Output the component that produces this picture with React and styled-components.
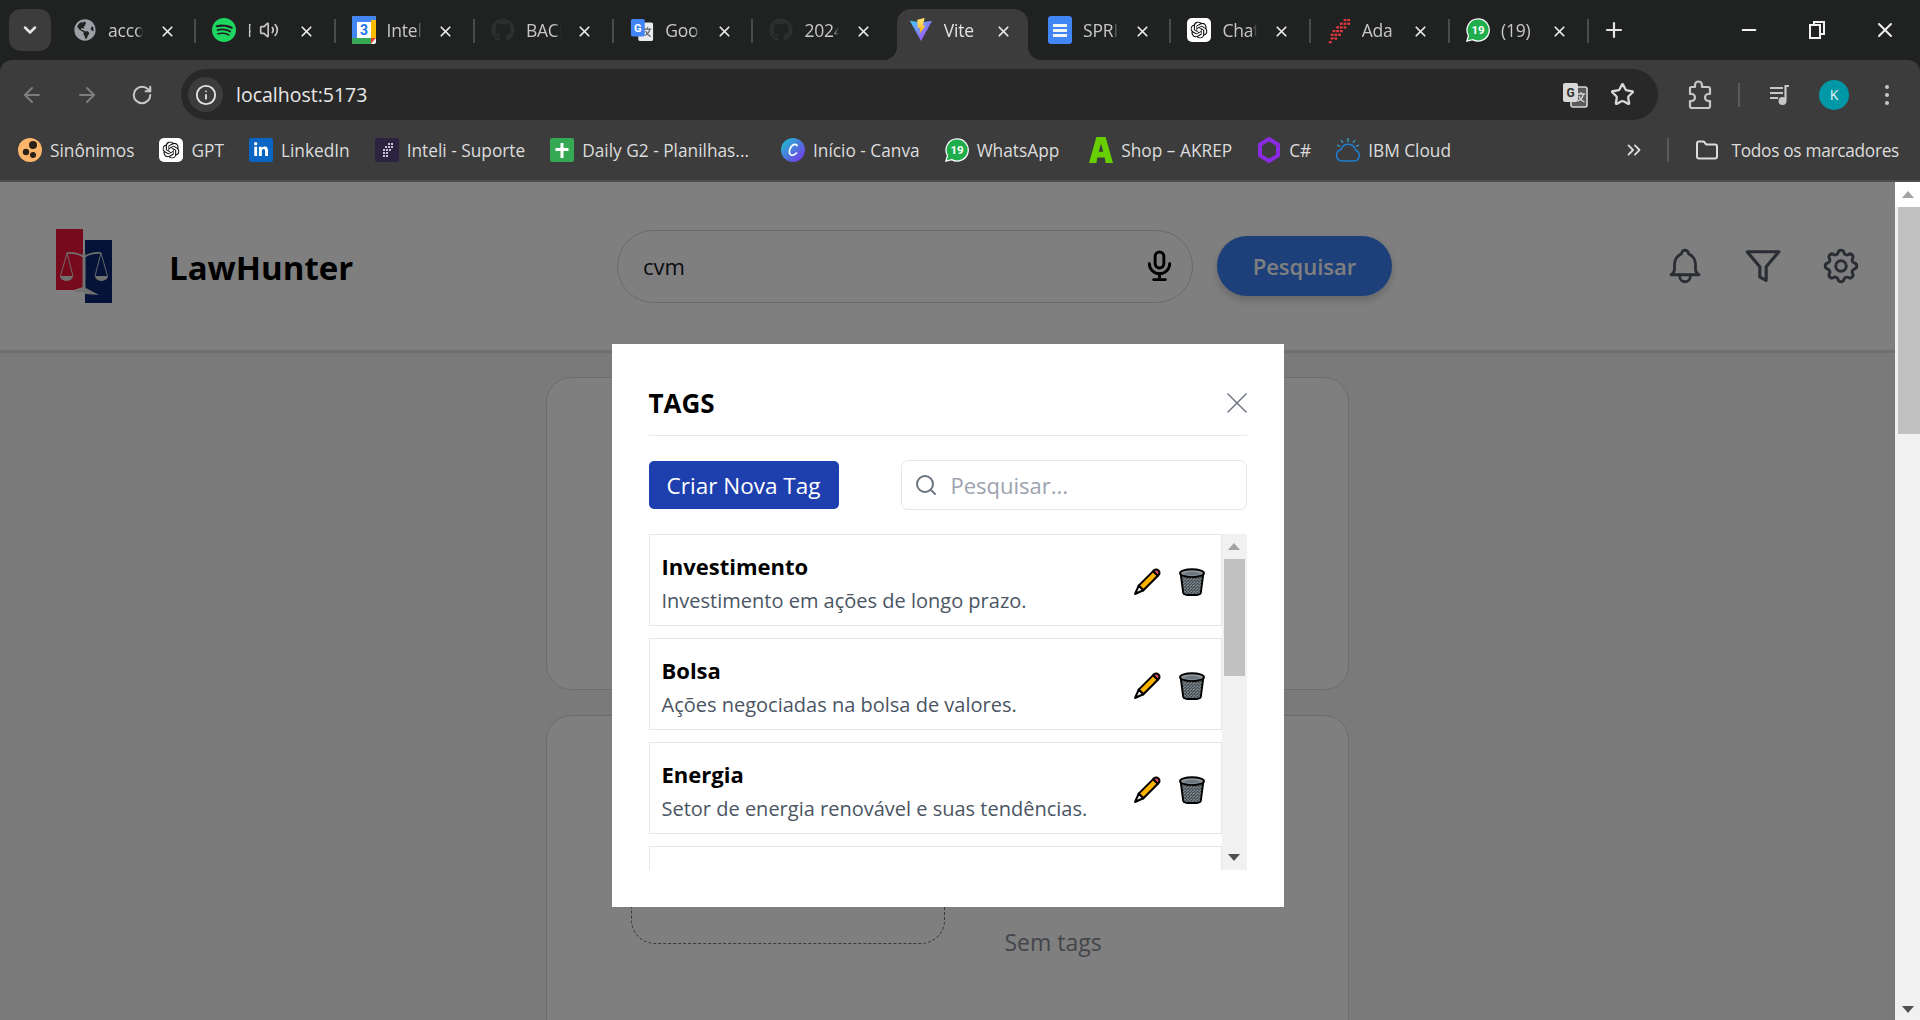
import React from "react";
import styled, { createGlobalStyle, css } from "styled-components";
import {
  ArrowLeft, ArrowRight, RotateCw, Info, Star, ChevronDown, X, Plus, Minus, Volume2, Folder, ChevronsRight, Search,
} from "lucide-react";
import { SiSpotify, SiOpenai } from "react-icons/si";
import { FaGithub, FaGlobeAmericas, FaLinkedinIn } from "react-icons/fa";
import { FiFilter } from "react-icons/fi";
import { TbBell, TbSettings, TbMicrophone } from "react-icons/tb";

const FONT = `"Open Sans", "Noto Sans", "Liberation Sans", sans-serif`;

const Global = createGlobalStyle`
  html, body { margin: 0; padding: 0; height: 100%; overflow: hidden; background: #202222; }
  #root { height: 100%; }
  * { box-sizing: border-box; }
  body { font-family: ${FONT}; }
`;

const Frame = styled.div`
  height: 1020px;
  display: flex;
  flex-direction: column;
  overflow: hidden;
`;

/* ---------- tab strip ---------- */
const TabStrip = styled.div`
  height: 60px;
  flex: none;
  background: #202222;
  display: flex;
  align-items: flex-end;
  padding-left: 9px;
`;
const TabSwitcher = styled.div`
  width: 42px;
  height: 42px;
  margin: 0 6px 9px 0;
  border-radius: 12px;
  background: #3c3c3c;
  color: #e3e3e3;
  display: flex;
  align-items: center;
  justify-content: center;
`;
const Tab = styled.div`
  width: 139.3px;
  height: 51px;
  flex: none;
  position: relative;
  display: flex;
  align-items: center;
  padding: 0 0 9px 16px;
  color: #c7c7c7;
  ${(p) => p.$sep && css`
    &::after {
      content: "";
      position: absolute;
      right: 0;
      top: 10px;
      height: 24px;
      width: 2px;
      background: #4a4c4c;
    }
  `}
  ${(p) => p.$active && css`
    background: #3c3c3c;
    border-radius: 14px 14px 0 0;
    color: #e3e3e3;
    margin: 0 4px;
    width: 131.3px;
    padding-left: 12px;
    &::before, &::after {
      content: "";
      position: absolute;
      bottom: 0;
      width: 14px;
      height: 14px;
      top: auto;
      background: radial-gradient(circle at 0 0, transparent 14px, #3c3c3c 14.5px);
    }
    &::before { left: -14px; }
    &::after { right: -14px; background: radial-gradient(circle at 100% 0, transparent 14px, #3c3c3c 14.5px); }
  `}
`;
const Fav = styled.span`
  width: 24px;
  height: 24px;
  flex: none;
  display: flex;
  align-items: center;
  justify-content: center;
`;
const TabLabel = styled.span`
  width: ${(p) => p.$w || 35}px;
  margin-left: 11px;
  font-size: 17.5px;
  letter-spacing: -0.2px;
  white-space: nowrap;
  overflow: hidden;
  -webkit-mask-image: linear-gradient(90deg, #000 82%, transparent);
  mask-image: linear-gradient(90deg, #000 82%, transparent);
`;
const TabAudio = styled.span`
  color: #c7c7c7;
  display: flex;
  margin-left: 8px;
  width: 22px;
`;
const TabClose = styled.span`
  position: absolute;
  left: ${(p) => p.$x}px;
  top: 13px;
  width: 18px;
  height: 18px;
  color: #ebebeb;
  display: flex;
  align-items: center;
  justify-content: center;
`;
const NewTab = styled.span`
  width: 24px;
  height: 24px;
  margin: 0 0 18px 13px;
  color: #e3e3e3;
  display: flex;
`;
const WindowControls = styled.div`
  margin-left: auto;
  display: flex;
  height: 60px;
  align-items: center;
  color: #f2f2f2;
  padding-right: 23px;
  gap: 44px;
`;
const WinBtn = styled.span`
  width: 24px;
  height: 24px;
  display: flex;
  align-items: center;
  justify-content: center;
`;

/* ---------- toolbar ---------- */
const Toolbar = styled.div`
  height: 60px;
  flex: none;
  background: #3c3c3c;
  border-radius: 12px 12px 0 0;
  display: flex;
  align-items: flex-end;
  padding-left: 20px;
  padding-right: 28px;
`;
const NavButton = styled.span`
  width: 24px;
  height: 24px;
  margin: 0 31px 13px 0;
  display: flex;
  align-items: center;
  justify-content: center;
  color: ${(p) => (p.$off ? "#7d7d7d" : "#c7c7c7")};
`;
const AddressBar = styled.div`
  width: 1477px;
  height: 51px;
  margin-left: -4px;
  background: #282828;
  border-radius: 26px;
  display: flex;
  align-items: center;
  padding: 0 23px 0 7px;
`;
const InfoChip = styled.span`
  width: 35px;
  height: 35px;
  border-radius: 50%;
  background: #3c3c3c;
  color: #e3e3e3;
  display: flex;
  align-items: center;
  justify-content: center;
`;
const Url = styled.span`
  margin-left: 13px;
  font-size: 19.5px;
  color: #e8e8e8;
`;
const AddressActions = styled.div`
  margin-left: auto;
  display: flex;
  align-items: center;
  gap: 22px;
  color: #d8d8d8;
`;
const ToolIcons = styled.div`
  flex: 1;
  height: 51px;
  display: flex;
  align-items: center;
  justify-content: flex-end;
  color: #c7c7c7;
`;
const ToolDivider = styled.span`
  width: 2px;
  height: 24px;
  background: #5a5a5a;
  margin: 0 28px 0 25px;
`;
const Avatar = styled.span`
  width: 30px;
  height: 30px;
  border-radius: 50%;
  background: #0097a7;
  color: #e6f7f8;
  font-size: 14px;
  display: flex;
  align-items: center;
  justify-content: center;
  margin: 0 36px 0 27px;
`;
const Kebab = styled.span`
  display: flex;
  flex-direction: column;
  gap: 4px;
  margin-right: 3px;
  & > i { width: 4px; height: 4px; border-radius: 50%; background: #c7c7c7; display: block; }
`;

/* ---------- bookmarks ---------- */
const Bookmarks = styled.div`
  height: 62px;
  flex: none;
  background: #3c3c3c;
  border-bottom: 2px solid #4e4e4e;
  display: flex;
  align-items: center;
  padding: 0 20px 0 18px;
  color: #dcdcdc;
  font-size: 17.3px;
`;
const Bookmark = styled.span`
  display: flex;
  align-items: center;
  gap: ${(p) => p.$gap || 8}px;
  margin-right: ${(p) => p.$end || 25}px;
  white-space: nowrap;
`;
const AllBookmarks = styled(Bookmark)`
  letter-spacing: -0.3px;
`;
const BookmarkEnd = styled.div`
  margin-left: auto;
  display: flex;
  align-items: center;
  white-space: nowrap;
  color: #dcdcdc;
`;
const BarDivider = styled.span`
  width: 2px;
  height: 24px;
  background: #5a5a5a;
  margin: 0 26px 0 22px;
`;

/* ---------- page ---------- */
const Viewport = styled.div`
  flex: 1;
  min-height: 0;
  display: flex;
`;
const Page = styled.div`
  flex: 1;
  position: relative;
  overflow: hidden;
  background: #f4f5f7;
`;
const PageScroll = styled.div`
  width: 25px;
  flex: none;
  background: #f1f1f1;
  display: flex;
  flex-direction: column;
  align-items: flex-end;
`;
const ScrollArrow = styled.span`
  width: 0;
  height: 0;
  border-left: 6px solid transparent;
  border-right: 6px solid transparent;
  ${(p) => (p.$down
    ? css`border-top: 7px solid #505050;`
    : css`border-bottom: 7px solid #a3a3a3;`)}
`;
const PageArrowBox = styled.div`
  height: 25px;
  width: 25px;
  background: #fff;
  display: flex;
  align-items: center;
  justify-content: center;
`;
const PageThumb = styled.div`
  width: 22px;
  height: 227px;
  background: #c1c1c1;
`;
const PageArrowBottom = styled.div`
  margin-top: auto;
  height: 21px;
  width: 25px;
  display: flex;
  align-items: center;
  justify-content: center;
`;
const Header = styled.header`
  height: 171px;
  background: #fff;
  border-bottom: 3px solid #dfdfdf;
  display: flex;
  align-items: center;
  padding: 0 33px 0 56px;
`;
const Brand = styled.div`
  width: 561px;
  display: flex;
  align-items: center;
  gap: 57px;
`;
const BrandName = styled.div`
  font-size: 33px;
  font-weight: 700;
  color: #000;
  padding-top: 2px;
`;
const SearchField = styled.div`
  width: 576px;
  height: 73px;
  border: 1px solid #cfd2d6;
  border-radius: 37px;
  display: flex;
  align-items: center;
  padding: 0 15px 0 23px;
  color: #000;
`;
const SearchValue = styled.input`
  flex: 1;
  border: none;
  outline: none;
  background: transparent;
  font: 400 22px ${FONT};
  color: #111827;
`;
const SearchButton = styled.button`
  width: 175px;
  height: 60px;
  margin-left: 24px;
  border: none;
  border-radius: 30px;
  background: #3b7ef5;
  color: #fff;
  font: 600 22px ${FONT};
  box-shadow: 0 4px 8px rgba(0, 0, 0, 0.2);
`;
const HeaderIcons = styled.div`
  margin-left: auto;
  display: flex;
  align-items: center;
  gap: 38px;
  color: #545a66;
`;
const Main = styled.main`
  padding-top: 24px;
  display: flex;
  flex-direction: column;
  align-items: center;
  gap: 25px;
  padding-right: 1px;
`;
const Card = styled.section`
  width: 803px;
  height: ${(p) => p.$h}px;
  flex: none;
  background: #fff;
  border: 1px solid #d6d8dc;
  border-radius: 25px;
  display: flex;
  align-items: flex-start;
  padding: 40px 0 0 84px;
  gap: 60px;
`;
const DashedBox = styled.div`
  width: 314px;
  height: 188px;
  border: 1px dashed #6b7280;
  border-radius: 24px;
`;
const NoTags = styled.div`
  margin-top: 170px;
  font-size: 23px;
  color: #868b94;
`;

/* ---------- modal ---------- */
const Overlay = styled.div`
  position: absolute;
  inset: 0;
  background: rgba(0, 0, 0, 0.5);
  display: flex;
  justify-content: center;
  align-items: flex-start;
  padding-top: 162px;
`;
const Modal = styled.div`
  width: 672px;
  height: 563px;
  background: #fff;
  padding: 37px;
`;
const ModalHead = styled.div`
  height: 55px;
  padding-bottom: 10px;
  border-bottom: 1.5px solid #e5e7eb;
  display: flex;
  align-items: center;
  justify-content: space-between;
`;
const ModalTitle = styled.h2`
  margin: 0;
  font-size: 26px;
  font-weight: 700;
  color: #000;
`;
const CloseBtn = styled.span`
  color: #6b7280;
  display: flex;
  margin-right: -8px;
`;
const ModalControls = styled.div`
  display: flex;
  align-items: center;
  justify-content: space-between;
  margin-top: 24px;
  height: 50px;
`;
const CreateBtn = styled.button`
  width: 190px;
  height: 48px;
  border: none;
  border-radius: 5px;
  background: #1e40af;
  color: #fff;
  font: 400 22.5px ${FONT};
`;
const TagSearch = styled.label`
  width: 346px;
  height: 50px;
  border: 1.5px solid #e5e7eb;
  border-radius: 7px;
  display: flex;
  align-items: center;
  padding-left: 12px;
  gap: 11px;
  color: #6b7280;
`;
const TagSearchInput = styled.input`
  flex: 1;
  min-width: 0;
  border: none;
  outline: none;
  font: 400 22px ${FONT};
  &::placeholder { color: #9ca3af; opacity: 1; }
`;
const ListWrap = styled.div`
  margin-top: 24px;
  height: 336px;
  display: flex;
  overflow: hidden;
`;
const TagList = styled.div`
  flex: 1;
  min-width: 0;
  display: flex;
  flex-direction: column;
  gap: 12px;
`;
const TagRow = styled.div`
  height: 92px;
  flex: none;
  border: 1.5px solid #e5e7eb;
  display: flex;
  align-items: center;
  justify-content: space-between;
  padding: 0 16px 0 12px;
`;
const TagBody = styled.div`
  padding-top: 4px;
`;
const TagName = styled.div`
  font-size: 22px;
  font-weight: 700;
  line-height: 32px;
  color: #000;
`;
const TagDesc = styled.div`
  margin-top: 5px;
  font-size: 20px;
  line-height: 28px;
  color: #4b5563;
  white-space: nowrap;
`;
const TagActions = styled.div`
  display: flex;
  gap: 18px;
  align-items: center;
  margin-top: 3px;
`;
const ListScroll = styled.div`
  width: 25px;
  flex: none;
  background: #f1f1f1;
  display: flex;
  flex-direction: column;
  align-items: center;
`;
const ListArrowBox = styled.div`
  height: 25px;
  display: flex;
  align-items: center;
  justify-content: center;
  flex: none;
`;
const ListThumb = styled.div`
  width: 21px;
  height: 117px;
  background: #c1c1c1;
`;
const ListArrowBottom = styled(ListArrowBox)`
  margin-top: auto;
`;

/* ---------- drawings ---------- */
const Square = ({ bg, r = 3, children }) => (
  <svg width="24" height="24" viewBox="0 0 24 24"><rect width="24" height="24" rx={r} fill={bg} />{children}</svg>
);
const Calendar = () => (
  <svg width="24" height="28" viewBox="0 0 24 28">
    <rect width="24" height="28" rx="2" fill="#fff" />
    <path d="M0 2a2 2 0 0 1 2-2h20a2 2 0 0 1 2 2v4H0z" fill="#4285f4" />
    <rect x="0" y="4" width="5" height="18" fill="#4285f4" />
    <rect x="19" y="4" width="5" height="18" fill="#fbbc04" />
    <path d="M0 22h5v6H2a2 2 0 0 1-2-2z" fill="#34a853" />
    <rect x="5" y="22" width="14" height="6" fill="#34a853" />
    <path d="M19 22h5l-5 6z" fill="#ea4335" />
    <text x="12" y="19" textAnchor="middle" fontSize="14" fontWeight="700" fill="#1a73e8" fontFamily="Roboto, sans-serif">3</text>
  </svg>
);
const GTranslate = ({ mono }) => (
  <svg width="26" height="26" viewBox="0 0 26 26">
    <rect x="9" y="5" width="16" height="20" rx="2" fill={mono ? "#5a5a5a" : "#e8eaed"} stroke={mono ? "#d8d8d8" : "none"} strokeWidth="1.6" />
    <rect x="1" y="1" width="15" height="19" rx="2" fill={mono ? "#d8d8d8" : "#4285f4"} />
    <text x="8.5" y="15" textAnchor="middle" fontSize="12" fontWeight="700" fill={mono ? "#333" : "#fff"} fontFamily="Roboto, sans-serif">G</text>
    <path d="M15 12h8M19 10v2M21.5 12c-1 4-3 6-5.5 7M17 14c1 3 3 5 5.5 6" fill="none" stroke={mono ? "#d8d8d8" : "#5f6368"} strokeWidth="1.3" />
  </svg>
);
const Vite = () => (
  <svg width="26" height="26" viewBox="0 0 26 26">
    <defs>
      <linearGradient id="vitea" x1="0" y1="0" x2="1" y2="1"><stop offset="0" stopColor="#41d1ff" /><stop offset="1" stopColor="#bd34fe" /></linearGradient>
      <linearGradient id="viteb" x1="0" y1="0" x2="0" y2="1"><stop offset="0" stopColor="#ffea83" /><stop offset="1" stopColor="#ffa800" /></linearGradient>
    </defs>
    <path d="M1 3 L13 5 L25 3 L13 25 Z" fill="url(#vitea)" />
    <path d="M17 0 L9 2 L9.5 11 L12 10.5 L11.5 17 L18 8 L15 8.5 Z" fill="url(#viteb)" />
  </svg>
);
const Docs = () => (
  <svg width="24" height="28" viewBox="0 0 24 28">
    <rect width="24" height="28" rx="3" fill="#4285f4" />
    <path d="M5 8h14v3H5zM5 13h14v3H5zM5 18h14v3H5z" fill="#f1f3f4" />
  </svg>
);
const Gpt = () => (
  <Square bg="#fff" r={5}><g transform="translate(3.5 3.5) scale(0.71)"><SiOpenai size={24} color="#111" /></g></Square>
);
const Ada = () => (
  <svg width="26" height="28" viewBox="0 0 26 28">
    {[[18, 2], [22, 2], [14, 6], [18, 6], [22, 6], [10, 10], [14, 10], [18, 10], [6, 14], [10, 14], [14, 14], [4, 18], [8, 18], [12, 18], [4, 22], [8, 22], [2, 26]].map(([x, y]) => (
      <rect key={`${x}-${y}`} x={x} y={y} width="3" height="2.4" fill="#e23b40" />
    ))}
  </svg>
);
const Whats = ({ s = 26 }) => (
  <svg width={s} height={s} viewBox="0 0 26 26">
    <path d="M13 1a12 12 0 0 0-10.3 18L1 25l6.2-1.6A12 12 0 1 0 13 1z" fill="#1fae4b" stroke="#fff" strokeWidth="1.4" />
    <text x="13" y="17.5" textAnchor="middle" fontSize="12.5" fontWeight="700" fill="#fff" fontFamily="Roboto, sans-serif">19</text>
  </svg>
);
const Sinonimos = () => (
  <svg width="24" height="26" viewBox="0 0 24 26">
    <circle cx="12" cy="13" r="12" fill="#fdb56b" />
    <circle cx="15" cy="8" r="4" fill="#2b2118" />
    <circle cx="8" cy="15" r="3.2" fill="#2b2118" />
    <circle cx="15" cy="18" r="3" fill="#2b2118" />
  </svg>
);
const LinkedIn = () => (
  <Square bg="#0a66c2" r={2}><g transform="translate(4 4)"><FaLinkedinIn size={16} color="#fff" /></g></Square>
);
const InteliIcon = () => (
  <Square bg="#2b2340" r={2}>
    {[[13, 5], [16, 5], [10, 8], [13, 8], [16, 8], [8, 11], [11, 11], [14, 11], [8, 14], [11, 14], [8, 17], [11, 17]].map(([x, y]) => (
      <rect key={`${x}-${y}`} x={x} y={y} width="2" height="2" fill="#c9c2d8" />
    ))}
  </Square>
);
const Sheets = () => (
  <Square bg="#34a853" r={2}><path d="M10.5 5h3v5h5v3h-5v7h-3v-7h-5v-3h5z" fill="#fff" /></Square>
);
const Canva = () => (
  <svg width="24" height="24" viewBox="0 0 24 24">
    <defs><linearGradient id="canva" x1="0" y1="0" x2="1" y2="1"><stop offset="0" stopColor="#19c8d0" /><stop offset="1" stopColor="#7d2ae8" /></linearGradient></defs>
    <circle cx="12" cy="12" r="12" fill="url(#canva)" />
    <path d="M16 7.5c-1-2-4-1.5-6 1.5s-2.5 7 0 8c2 .8 4-.5 5.5-2" fill="none" stroke="#fff" strokeWidth="1.7" strokeLinecap="round" />
  </svg>
);
const Akrep = () => (
  <svg width="26" height="28" viewBox="0 0 26 28">
    <path fillRule="evenodd" d="M8 0h10l8 28h-8l-1-6H9l-1 6H0zM13 7l-2.5 9h5z" fill="#67cf00" />
  </svg>
);
const CSharp = () => (
  <svg width="22" height="26" viewBox="0 0 22 26">
    <path d="M11 2 L20 7.5 V18.5 L11 24 L2 18.5 V7.5 Z" fill="none" stroke="#8a2be2" strokeWidth="4" />
  </svg>
);
const IbmCloud = () => (
  <svg width="24" height="26" viewBox="0 0 24 26" fill="none">
    <path d="M6 24h12a5.5 5.5 0 0 0 1.5-10.7A7.5 7.5 0 0 0 5 12.6 5.8 5.8 0 0 0 6 24z" stroke="#1f7fd1" strokeWidth="1.5" />
    <path d="M12 1v4M5 3l2 3M19 3l-2 3M1 8l3 1.5M23 8l-3 1.5" stroke="#3aa3d8" strokeWidth="1.3" />
  </svg>
);
const Extension = () => (
  <svg width="26" height="30" viewBox="0 0 26 30" fill="none" stroke="#c7c7c7" strokeWidth="2.2" strokeLinejoin="round">
    <path d="M3 7h5V5a3.5 3.5 0 0 1 7 0v2h6a2 2 0 0 1 2 2v5h-1.5a3.5 3.5 0 0 0 0 7H23v5a2 2 0 0 1-2 2H5a2 2 0 0 1-2-2v-5h1.5a3.5 3.5 0 0 0 0-7H3V7" />
  </svg>
);
const ListMedia = () => (
  <svg width="24" height="24" viewBox="0 0 24 24" fill="none" stroke="#c7c7c7" strokeWidth="2">
    <path d="M2 5h13M2 10h13M2 15h8" />
    <path d="M21 3h-3.5v14" strokeWidth="2.2" />
    <circle cx="14.5" cy="18" r="3" fill="#c7c7c7" />
  </svg>
);
const RestoreIcon = () => (
  <svg width="16" height="18" viewBox="0 0 16 18" fill="none" stroke="#f2f2f2" strokeWidth="2">
    <rect x="1" y="4" width="10" height="13" />
    <path d="M5 4V1h10v12h-4" />
  </svg>
);
const Logo = () => (
  <svg width="56" height="74" viewBox="0 0 56 74">
    <path d="M0 0H27V58L18 61H0Z" fill="#ee1538" />
    <rect x="29" y="11" width="27" height="63" fill="#08266e" />
    <g fill="none" stroke="#e2e2e2" strokeWidth="0.9">
      <path d="M28 24 V60" strokeWidth="3" />
      <path d="M11 24 Q20 23 28 28 Q36 23 45 24" strokeWidth="1.6" />
      <path d="M11 24 L4.5 47 M11 24 L17 47 M45 24 L39 47 M45 24 L51.5 47" />
    </g>
    <path d="M4 47h13a6.5 5 0 0 1-13 0zM39 47h13a6.5 5 0 0 1-13 0z" fill="#e2e2e2" />
    <path d="M17 63 L28 58 L43 66 L30 65 L26 63 Z" fill="#e2e2e2" />
  </svg>
);
const Pencil = () => (
  <svg width="28" height="28" viewBox="0 0 27 27">
    <path d="M5.5 17 L19.5 3 L24 7.5 L10 21.5 Z" fill="#ffb300" stroke="#000" strokeWidth="2" strokeLinejoin="round" />
    <path d="M19.5 3 C21 1 23 1 24.5 2.5 C26 4 26 6 24 7.5 Z" fill="#e8505b" stroke="#000" strokeWidth="2" strokeLinejoin="round" />
    <path d="M5.5 17 L10 21.5 L2 25 Z" fill="#e9e3d3" stroke="#000" strokeWidth="2" strokeLinejoin="round" />
    <path d="M1.5 25.5 L3 21.5 L5.5 24 Z" fill="#000" />
  </svg>
);
const Trash = ({ id }) => (
  <svg width="26" height="28" viewBox="0 0 25 27">
    <defs>
      <pattern id={id} width="3" height="3" patternUnits="userSpaceOnUse">
        <rect width="3" height="3" fill="#8b979d" />
        <path d="M0 0L3 3M3 0L0 3" stroke="#3b4246" strokeWidth="0.8" />
      </pattern>
    </defs>
    <path d="M1.5 5 L4 24 Q4.5 26 8 26 H17 Q20.5 26 21 24 L23.5 5 Z" fill={`url(#${id})`} stroke="#000" strokeWidth="1.8" />
    <ellipse cx="12.5" cy="5" rx="11.5" ry="3.8" fill="#8d979c" stroke="#000" strokeWidth="1.8" />
    <ellipse cx="12.5" cy="5.5" rx="7.5" ry="1.8" fill="#6f797e" />
  </svg>
);

const x14 = <X size={17} strokeWidth={2.4} />;
const tabs = [
  { icon: <FaGlobeAmericas size={22} color="#9aa0a6" />, label: "accounts", sep: true },
  { icon: <SiSpotify size={24} color="#1ed760" />, label: "Premium", audio: true, sep: true },
  { icon: <Calendar />, label: "Inteli", sep: true },
  { icon: <FaGithub size={24} color="#2c2e2f" />, label: "BACK", sep: true },
  { icon: <GTranslate />, label: "Google", sep: true },
  { icon: <FaGithub size={24} color="#2c2e2f" />, label: "2024", sep: false },
  { icon: <Vite />, label: "Vite", active: true },
  { icon: <Docs />, label: "SPRINT", sep: true },
  { icon: <Gpt />, label: "Chat", sep: true },
  { icon: <Ada />, label: "Ada", sep: true },
  { icon: <Whats />, label: "(19)", sep: true },
];
const marks = [
  { icon: <Sinonimos />, label: "Sinônimos" },
  { icon: <Gpt />, label: "GPT" },
  { icon: <LinkedIn />, label: "LinkedIn" },
  { icon: <InteliIcon />, label: "Inteli - Suporte" },
  { icon: <Sheets />, label: "Daily G2 - Planilhas...", end: 32 },
  { icon: <Canva />, label: "Início - Canva" },
  { icon: <Whats s={24} />, label: "WhatsApp", end: 30 },
  { icon: <Akrep />, label: "Shop – AKREP" },
  { icon: <CSharp />, label: "C#" },
  { icon: <IbmCloud />, label: "IBM Cloud" },
];
const tags = [
  { name: "Investimento", desc: "Investimento em ações de longo prazo." },
  { name: "Bolsa", desc: "Ações negociadas na bolsa de valores." },
  { name: "Energia", desc: "Setor de energia renovável e suas tendências." },
  { name: "Regulamentação", desc: "Normas e regras do mercado." },
];

export default function App() {
  return (
    <Frame>
      <Global />
      <TabStrip>
        <TabSwitcher><ChevronDown size={20} strokeWidth={3} /></TabSwitcher>
        {tabs.map((t) => (
          <Tab key={t.label} $active={t.active} $sep={t.sep}>
            <Fav>{t.icon}</Fav>
            <TabLabel $w={t.audio ? 4 : 35}>{t.label}</TabLabel>
            {t.audio && <TabAudio><Volume2 size={20} /></TabAudio>}
            <TabClose $x={t.active ? 98 : 101}>{x14}</TabClose>
          </Tab>
        ))}
        <NewTab><Plus size={24} strokeWidth={2.2} /></NewTab>
        <WindowControls>
          <WinBtn><Minus size={22} /></WinBtn>
          <WinBtn><RestoreIcon /></WinBtn>
          <WinBtn><X size={24} strokeWidth={2} /></WinBtn>
        </WindowControls>
      </TabStrip>

      <Toolbar>
        <NavButton $off><ArrowLeft size={24} strokeWidth={2} /></NavButton>
        <NavButton $off><ArrowRight size={24} strokeWidth={2} /></NavButton>
        <NavButton><RotateCw size={22} strokeWidth={2.2} /></NavButton>
        <AddressBar>
          <InfoChip><Info size={22} strokeWidth={2} /></InfoChip>
          <Url>localhost:5173</Url>
          <AddressActions>
            <GTranslate mono />
            <Star size={25} strokeWidth={2.2} />
          </AddressActions>
        </AddressBar>
        <ToolIcons>
          <Extension />
          <ToolDivider />
          <ListMedia />
          <Avatar>K</Avatar>
          <Kebab><i /><i /><i /></Kebab>
        </ToolIcons>
      </Toolbar>

      <Bookmarks>
        {marks.map((m) => (
          <Bookmark key={m.label} $end={m.end}><Fav>{m.icon}</Fav>{m.label}</Bookmark>
        ))}
        <BookmarkEnd>
          <ChevronsRight size={22} strokeWidth={2} />
          <BarDivider />
          <AllBookmarks $gap={12} $end={1}><Fav><Folder size={25} strokeWidth={2} /></Fav>Todos os marcadores</AllBookmarks>
        </BookmarkEnd>
      </Bookmarks>

      <Viewport>
        <Page>
          <Header>
            <Brand>
              <Logo />
              <BrandName>LawHunter</BrandName>
            </Brand>
            <SearchField>
              <SearchValue readOnly value="cvm" />
              <TbMicrophone size={35} />
            </SearchField>
            <SearchButton>Pesquisar</SearchButton>
            <HeaderIcons>
              <TbBell size={42} strokeWidth={1.6} />
              <FiFilter size={38} />
              <TbSettings size={42} strokeWidth={1.7} />
            </HeaderIcons>
          </Header>
          <Main>
            <Card $h={313} />
            <Card $h={420}>
              <DashedBox />
              <NoTags>Sem tags</NoTags>
            </Card>
          </Main>
          <Overlay>
            <Modal>
              <ModalHead>
                <ModalTitle>TAGS</ModalTitle>
                <CloseBtn><X size={36} strokeWidth={1} /></CloseBtn>
              </ModalHead>
              <ModalControls>
                <CreateBtn>Criar Nova Tag</CreateBtn>
                <TagSearch>
                  <Search size={24} strokeWidth={2} />
                  <TagSearchInput readOnly placeholder="Pesquisar..." />
                </TagSearch>
              </ModalControls>
              <ListWrap>
                <TagList>
                  {tags.map((t, i) => (
                    <TagRow key={t.name}>
                      <TagBody>
                        <TagName>{t.name}</TagName>
                        <TagDesc>{t.desc}</TagDesc>
                      </TagBody>
                      <TagActions>
                        <Pencil />
                        <Trash id={`mesh${i}`} />
                      </TagActions>
                    </TagRow>
                  ))}
                </TagList>
                <ListScroll>
                  <ListArrowBox><ScrollArrow /></ListArrowBox>
                  <ListThumb />
                  <ListArrowBottom><ScrollArrow $down /></ListArrowBottom>
                </ListScroll>
              </ListWrap>
            </Modal>
          </Overlay>
        </Page>
        <PageScroll>
          <PageArrowBox><ScrollArrow /></PageArrowBox>
          <PageThumb />
          <PageArrowBottom><ScrollArrow $down /></PageArrowBottom>
        </PageScroll>
      </Viewport>
    </Frame>
  );
}
